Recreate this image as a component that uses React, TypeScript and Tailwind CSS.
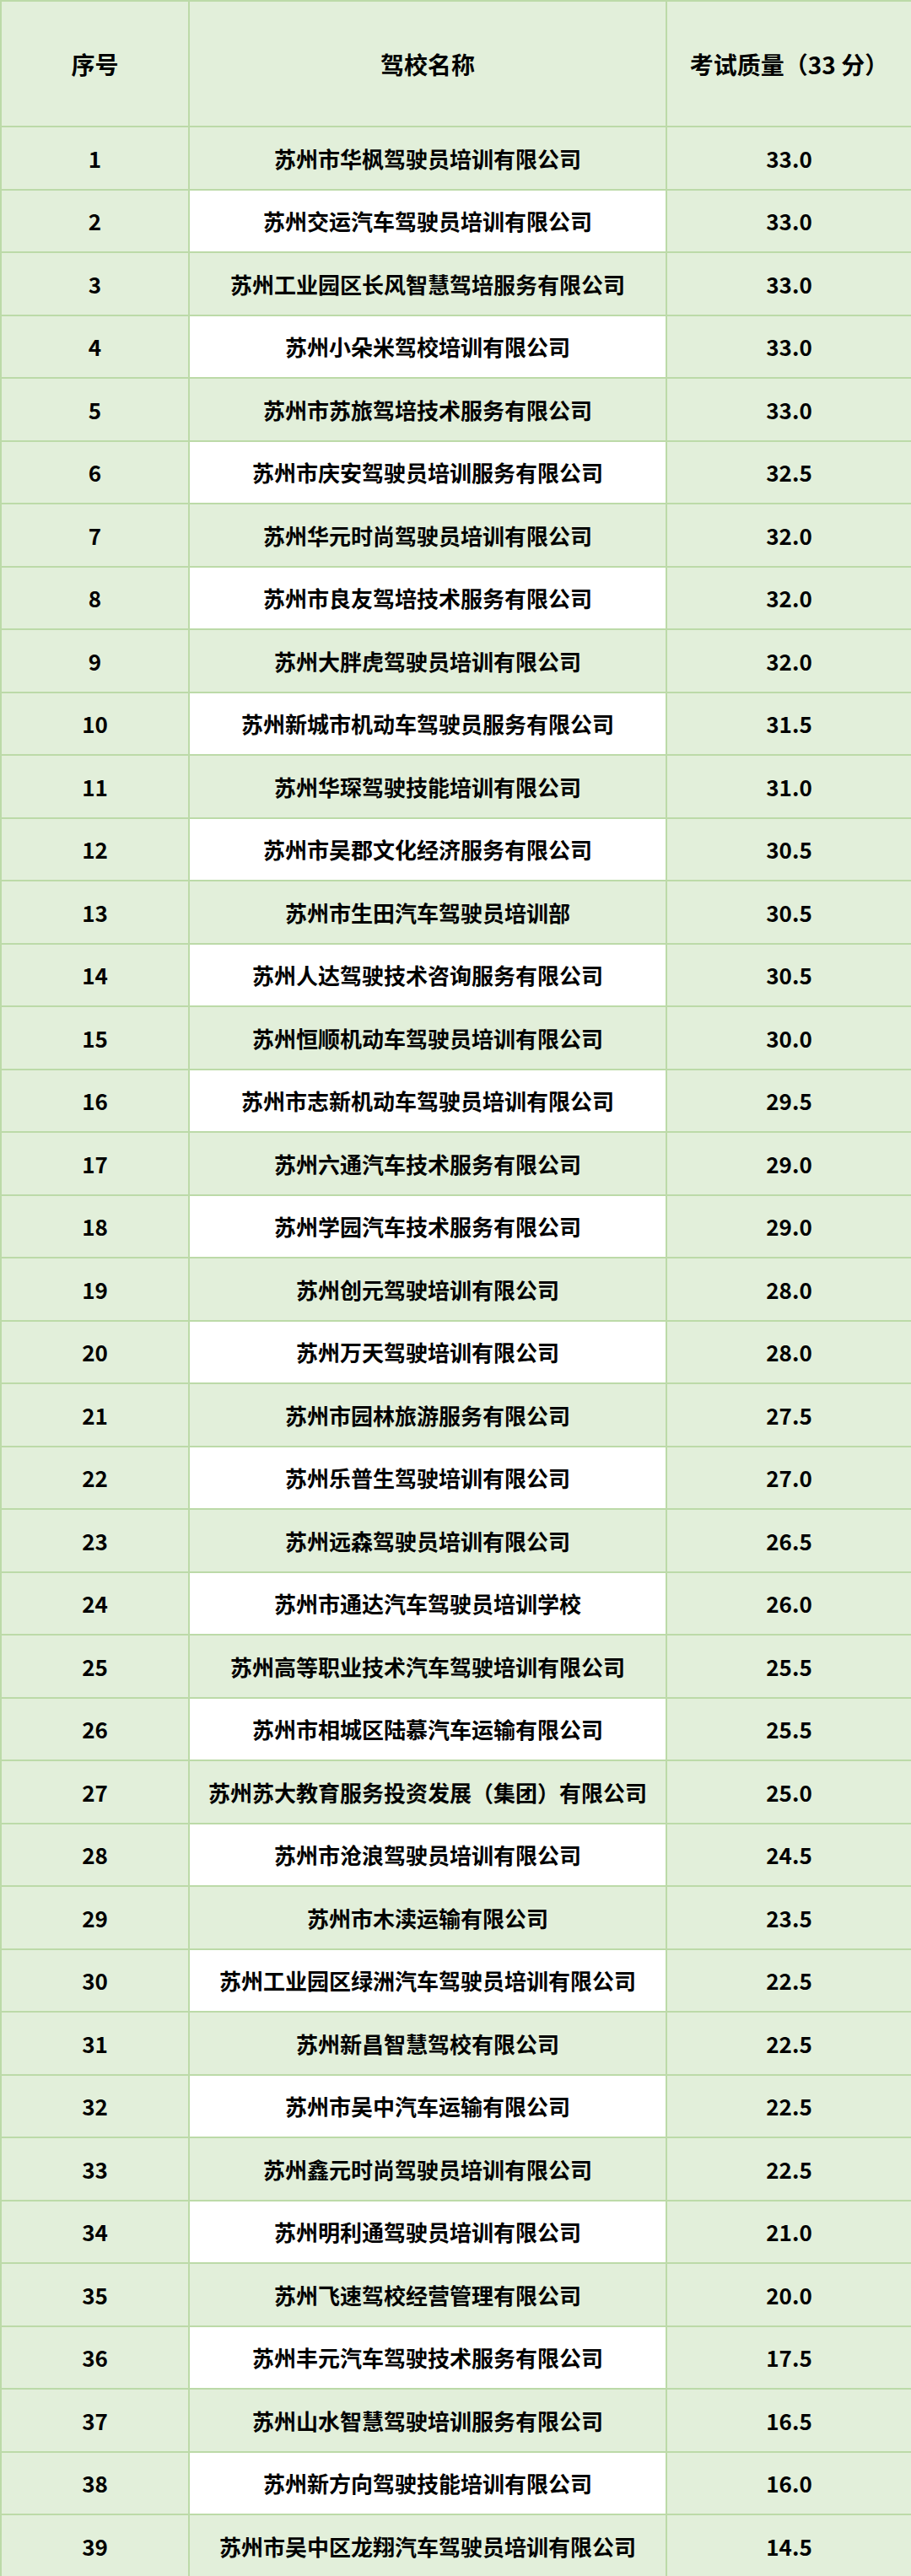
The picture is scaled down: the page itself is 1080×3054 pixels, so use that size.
import React from 'react';

const rows: [string, string][] = [
  ['苏州市华枫驾驶员培训有限公司', '33.0'],
  ['苏州交运汽车驾驶员培训有限公司', '33.0'],
  ['苏州工业园区长风智慧驾培服务有限公司', '33.0'],
  ['苏州小朵米驾校培训有限公司', '33.0'],
  ['苏州市苏旅驾培技术服务有限公司', '33.0'],
  ['苏州市庆安驾驶员培训服务有限公司', '32.5'],
  ['苏州华元时尚驾驶员培训有限公司', '32.0'],
  ['苏州市良友驾培技术服务有限公司', '32.0'],
  ['苏州大胖虎驾驶员培训有限公司', '32.0'],
  ['苏州新城市机动车驾驶员服务有限公司', '31.5'],
  ['苏州华琛驾驶技能培训有限公司', '31.0'],
  ['苏州市吴郡文化经济服务有限公司', '30.5'],
  ['苏州市生田汽车驾驶员培训部', '30.5'],
  ['苏州人达驾驶技术咨询服务有限公司', '30.5'],
  ['苏州恒顺机动车驾驶员培训有限公司', '30.0'],
  ['苏州市志新机动车驾驶员培训有限公司', '29.5'],
  ['苏州六通汽车技术服务有限公司', '29.0'],
  ['苏州学园汽车技术服务有限公司', '29.0'],
  ['苏州创元驾驶培训有限公司', '28.0'],
  ['苏州万天驾驶培训有限公司', '28.0'],
  ['苏州市园林旅游服务有限公司', '27.5'],
  ['苏州乐普生驾驶培训有限公司', '27.0'],
  ['苏州远森驾驶员培训有限公司', '26.5'],
  ['苏州市通达汽车驾驶员培训学校', '26.0'],
  ['苏州高等职业技术汽车驾驶培训有限公司', '25.5'],
  ['苏州市相城区陆慕汽车运输有限公司', '25.5'],
  ['苏州苏大教育服务投资发展（集团）有限公司', '25.0'],
  ['苏州市沧浪驾驶员培训有限公司', '24.5'],
  ['苏州市木渎运输有限公司', '23.5'],
  ['苏州工业园区绿洲汽车驾驶员培训有限公司', '22.5'],
  ['苏州新昌智慧驾校有限公司', '22.5'],
  ['苏州市吴中汽车运输有限公司', '22.5'],
  ['苏州鑫元时尚驾驶员培训有限公司', '22.5'],
  ['苏州明利通驾驶员培训有限公司', '21.0'],
  ['苏州飞速驾校经营管理有限公司', '20.0'],
  ['苏州丰元汽车驾驶技术服务有限公司', '17.5'],
  ['苏州山水智慧驾驶培训服务有限公司', '16.5'],
  ['苏州新方向驾驶技能培训有限公司', '16.0'],
  ['苏州市吴中区龙翔汽车驾驶员培训有限公司', '14.5'],
];

const cell = 'border-2 border-[#bcdaa8] text-center align-middle p-0';

export default function App() {
  return (
    <div className="w-[1080px] bg-white" style={{ fontFamily: '"Noto Sans CJK SC", "Noto Sans", sans-serif' }}>
      <table className="w-[1080px] table-fixed border-collapse font-bold text-black">
        <colgroup>
          <col className="w-[223px]" />
          <col className="w-[566px]" />
          <col className="w-[291px]" />
        </colgroup>
        <thead>
          <tr className="h-[149px] bg-[#e2efda] text-[28px]">
            <th className={cell}>序号</th>
            <th className={cell}>驾校名称</th>
            <th className={cell}>考试质量（33 分）</th>
          </tr>
        </thead>
        <tbody className="text-[26px]">
          {rows.map(([name, score], i) => (
            <tr key={i} className="h-[74.5px]">
              <td className={`${cell} bg-[#e2efda]`}>{i + 1}</td>
              <td className={`${cell} ${i % 2 === 0 ? 'bg-[#e2efda]' : 'bg-white'}`}>{name}</td>
              <td className={`${cell} bg-[#e2efda]`}>{score}</td>
            </tr>
          ))}
        </tbody>
      </table>
    </div>
  );
}
